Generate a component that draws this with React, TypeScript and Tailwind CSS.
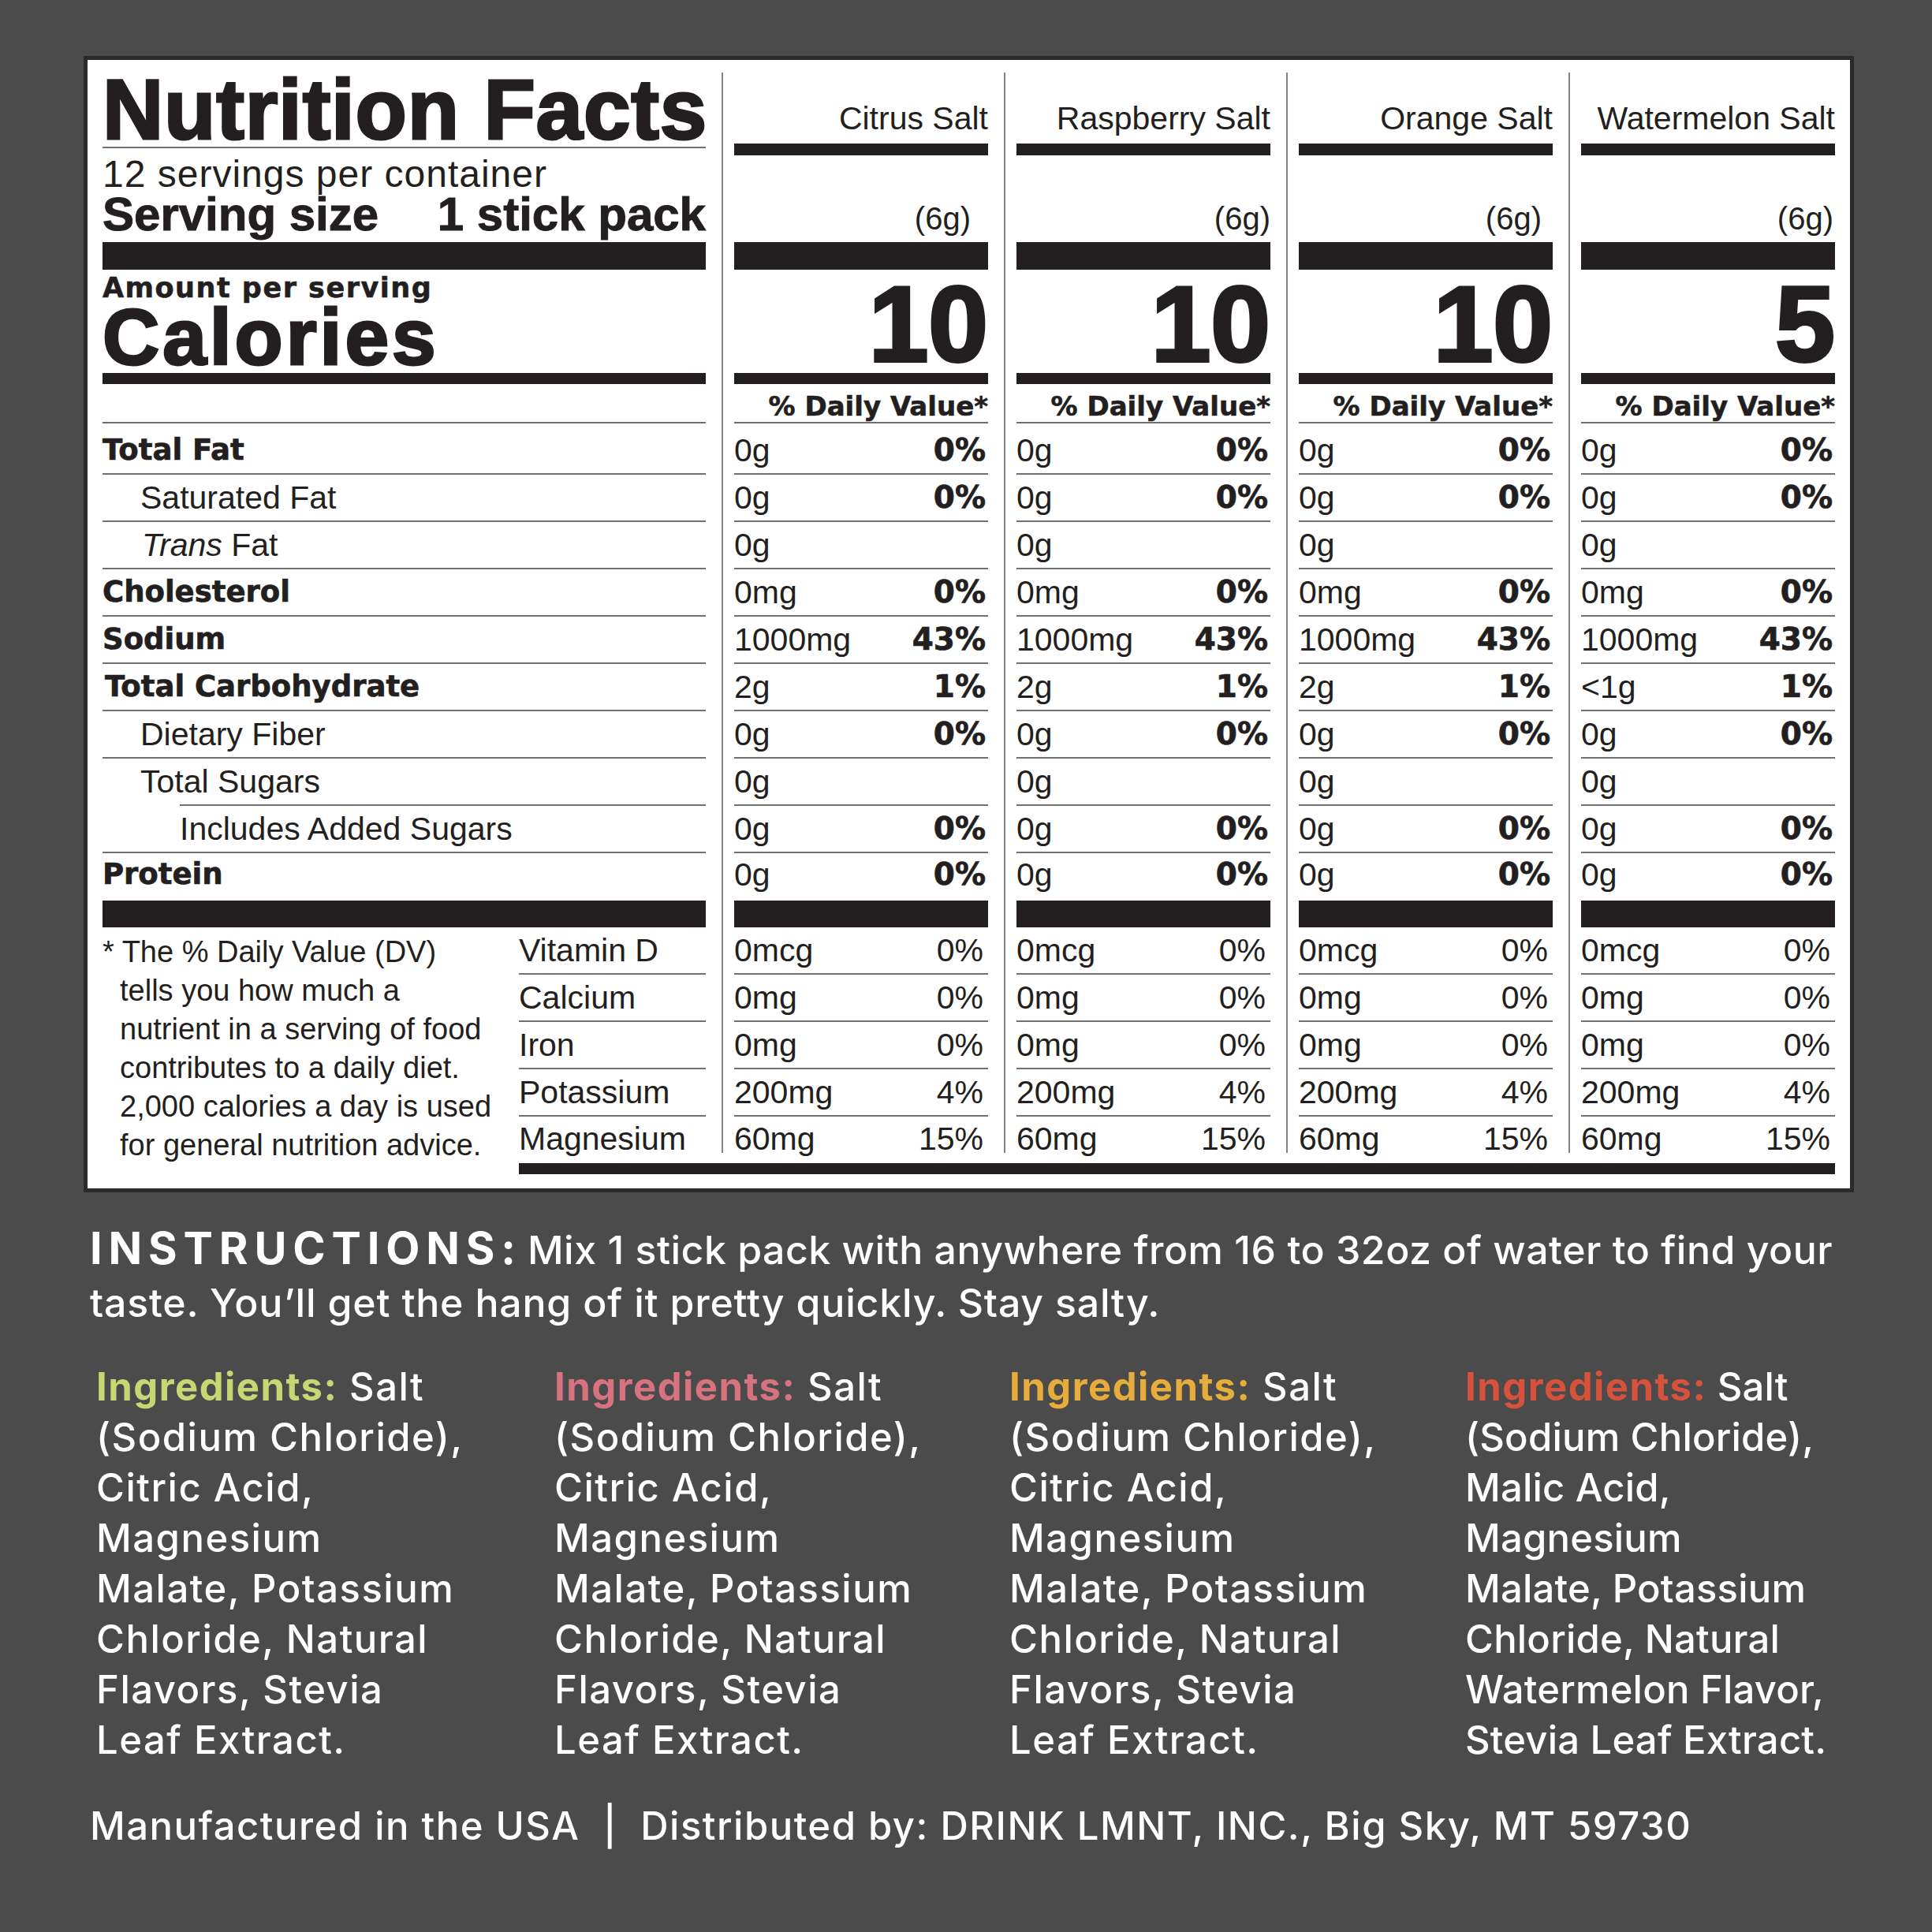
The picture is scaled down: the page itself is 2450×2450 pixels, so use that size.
import type { ReactNode } from "react";

const INK = "#231f20";

type Flavor = { name: string; cal: string; carb: string; gramPad: string };

const flavors: Flavor[] = [
  { name: "Citrus Salt", cal: "10", carb: "2g", gramPad: "pr-[22px]" },
  { name: "Raspberry Salt", cal: "10", carb: "2g", gramPad: "pr-[0px]" },
  { name: "Orange Salt", cal: "10", carb: "2g", gramPad: "pr-[14px]" },
  { name: "Watermelon Salt", cal: "5", carb: "<1g", gramPad: "pr-[2px]" },
];

type Row = {
  label: ReactNode;
  labelClass: string;
  rowClass: string;
  val: (f: Flavor) => string;
  dv: string;
};

const bold = "font-['DejaVu_Sans',sans-serif] font-bold text-[37px] [-webkit-text-stroke:0.7px_#231f20]";
const reg = "text-[41px]";

// main nutrient rows; first row is a touch taller than the rest
const rows: Row[] = [
  { label: "Total Fat", labelClass: bold, rowClass: "h-[65px]", val: () => "0g", dv: "0%" },
  { label: "Saturated Fat", labelClass: `${reg} pl-[48px]`, rowClass: "h-[60px]", val: () => "0g", dv: "0%" },
  {
    label: (
      <>
        <i>Trans</i> Fat
      </>
    ),
    labelClass: `${reg} pl-[50px]`,
    rowClass: "h-[60px]",
    val: () => "0g",
    dv: "",
  },
  { label: "Cholesterol", labelClass: bold, rowClass: "h-[60px]", val: () => "0mg", dv: "0%" },
  { label: "Sodium", labelClass: bold, rowClass: "h-[60px]", val: () => "1000mg", dv: "43%" },
  { label: "Total Carbohydrate", labelClass: `${bold} pl-[3px]`, rowClass: "h-[60px]", val: (f) => f.carb, dv: "1%" },
  { label: "Dietary Fiber", labelClass: `${reg} pl-[48px]`, rowClass: "h-[60px]", val: () => "0g", dv: "0%" },
  { label: "Total Sugars", labelClass: `${reg} pl-[48px]`, rowClass: "h-[60px]", val: () => "0g", dv: "" },
  { label: "Includes Added Sugars", labelClass: `${reg} pl-[98px]`, rowClass: "h-[60px]", val: () => "0g", dv: "0%" },
];

const vitamins = [
  { label: "Vitamin D", val: "0mcg", dv: "0%" },
  { label: "Calcium", val: "0mg", dv: "0%" },
  { label: "Iron", val: "0mg", dv: "0%" },
  { label: "Potassium", val: "200mg", dv: "4%" },
  { label: "Magnesium", val: "60mg", dv: "15%" },
];

const ingredients = [
  {
    color: "text-[#c9d674]",
    body: "tracking-[1.5px]",
    lines: ["(Sodium Chloride),", "Citric Acid,", "Magnesium", "Malate, Potassium", "Chloride, Natural", "Flavors, Stevia", "Leaf Extract."],
  },
  {
    color: "text-[#d6737e]",
    body: "tracking-[1.5px]",
    lines: ["(Sodium Chloride),", "Citric Acid,", "Magnesium", "Malate, Potassium", "Chloride, Natural", "Flavors, Stevia", "Leaf Extract."],
  },
  {
    color: "text-[#e6ad3d]",
    body: "tracking-[1.5px]",
    lines: ["(Sodium Chloride),", "Citric Acid,", "Magnesium", "Malate, Potassium", "Chloride, Natural", "Flavors, Stevia", "Leaf Extract."],
  },
  {
    color: "text-[#d7523d]",
    body: "tracking-[0.2px]",
    lines: ["(Sodium Chloride),", "Malic Acid,", "Magnesium", "Malate, Potassium", "Chloride, Natural", "Watermelon Flavor,", "Stevia Leaf Extract."],
  },
];

function Bar({ h }: { h: string }) {
  return <div className={`${h} bg-[#231f20]`} />;
}

function LeftColumn() {
  return (
    <div className="w-[765px] shrink-0">
      <div className="h-[96px] whitespace-nowrap border-b-2 border-[#6f6f6f] text-[107px] font-bold leading-[95px] tracking-[0.8px] [-webkit-text-stroke:3px_#231f20]">
        Nutrition Facts
      </div>
      <div className="flex h-[119px] flex-col">
        <div className="mt-[9px] whitespace-nowrap text-[48px] leading-[48px] tracking-[1px]">
          12 servings per container
        </div>
        <div className="mt-[3px] flex justify-between whitespace-nowrap text-[60px] font-bold leading-[48px] [-webkit-text-stroke:1px_#231f20]">
          <span>Serving size</span>
          <span>1 stick pack</span>
        </div>
      </div>
      <Bar h="h-[35px]" />
      <div className="flex h-[131px] flex-col">
        <div className="mt-[5px] whitespace-nowrap font-['DejaVu_Sans',sans-serif] text-[35px] font-bold leading-[36px] tracking-[1.5px] [-webkit-text-stroke:0.6px_#231f20]">
          Amount per serving
        </div>
        <div className="mt-[4px] text-[100px] font-bold leading-[80px] tracking-[4px] [-webkit-text-stroke:3px_#231f20]">
          Calories
        </div>
      </div>
      <Bar h="h-[14px]" />
      <div className="h-[50px] border-b-2 border-[#6f6f6f]" />

      {rows.map((r, i) => (
        <div
          key={i}
          className={`flex items-end border-b-2 border-[#6f6f6f] pb-[7px] ${r.rowClass} ${i === 7 ? "ml-[98px]" : ""}`}
        >
          <span className={`whitespace-nowrap leading-[44px] ${r.labelClass} ${i === 7 ? "-ml-[98px]" : ""}`}>
            {r.label}
          </span>
        </div>
      ))}
      <div className="flex h-[60px] items-end pb-[11px]">
        <span className={`leading-[44px] ${bold}`}>Protein</span>
      </div>
      <Bar h="h-[34px]" />

      <div className="flex">
        <div className="h-[286px] w-[528px] shrink-0 pl-[22px] pt-[7px] -indent-[22px] text-[38px] leading-[49px]">
          * The % Daily Value (DV)
          <br />
          tells you how much a
          <br />
          nutrient in a serving of food
          <br />
          contributes to a daily diet.
          <br />
          2,000 calories a day is used
          <br />
          for general nutrition advice.
        </div>
        <div className="flex-1">
          {vitamins.map((v, i) =>
            i < 4 ? (
              <div key={v.label} className="flex h-[60px] items-end border-b-2 border-[#6f6f6f] pb-[7px]">
                <span className="text-[41px] leading-[44px]">{v.label}</span>
              </div>
            ) : (
              <div key={v.label} className="flex h-[46px] items-end">
                <span className="-mb-[4px] text-[41px] leading-[44px]">{v.label}</span>
              </div>
            ),
          )}
        </div>
      </div>
    </div>
  );
}

function FlavorColumn({ f }: { f: Flavor }) {
  return (
    <div className="ml-[20px] shrink-0 border-l-2 border-[#858585] pl-[14px]">
      <div className="w-[322px]">
        <div className="flex h-[90px] items-end justify-end whitespace-nowrap pb-[12px] text-[41px] leading-[40px]">
          {f.name}
        </div>
        <Bar h="h-[15px]" />
        <div className={`flex h-[110px] items-end justify-end pb-[10px] text-[40px] leading-[40px] ${f.gramPad}`}>
          (6g)
        </div>
        <Bar h="h-[35px]" />
        <div className="flex h-[131px] items-end justify-end pb-[2px] text-[136px] font-bold leading-[120px] [-webkit-text-stroke:4px_#231f20]">
          {f.cal}
        </div>
        <Bar h="h-[14px]" />
        <div className="flex h-[50px] items-end justify-end whitespace-nowrap border-b-2 border-[#6f6f6f] pb-[2px] font-['DejaVu_Sans',sans-serif] text-[34px] font-bold leading-[36px] [-webkit-text-stroke:0.6px_#231f20]">
          % Daily Value*
        </div>

        {rows.map((r, i) => (
          <div
            key={i}
            className={`flex items-end justify-between border-b-2 border-[#6f6f6f] pb-[7px] pr-[3px] ${r.rowClass}`}
          >
            <span className="text-[41px] leading-[44px]">{r.val(f)}</span>
            <span className={`leading-[44px] ${bold} text-[39px]`}>{r.dv}</span>
          </div>
        ))}
        <div className="flex h-[60px] items-end justify-between pb-[11px] pr-[3px]">
          <span className="text-[41px] leading-[44px]">0g</span>
          <span className={`leading-[44px] ${bold} text-[39px]`}>0%</span>
        </div>
        <Bar h="h-[34px]" />

        {vitamins.map((v, i) =>
          i < 4 ? (
            <div key={v.label} className="flex h-[60px] items-end justify-between border-b-2 border-[#6f6f6f] pb-[7px] pr-[6px]">
              <span className="text-[41px] leading-[44px]">{v.val}</span>
              <span className="text-[41px] leading-[44px]">{v.dv}</span>
            </div>
          ) : (
            <div key={v.label} className="flex h-[46px] items-end justify-between pr-[6px]">
              <span className="-mb-[4px] text-[41px] leading-[44px]">{v.val}</span>
              <span className="-mb-[4px] text-[41px] leading-[44px]">{v.dv}</span>
            </div>
          ),
        )}
      </div>
    </div>
  );
}

export default function App() {
  return (
    <div className="h-[2450px] w-[2450px] overflow-hidden bg-[#4b4b4b] pt-[71px]">
      {/* label card */}
      <div
        className="ml-[106px] w-[2245px] border-[5px] border-[#2a2a2a] bg-white pb-[18px] pl-[19px] pr-[19px] pt-[16px] font-['Liberation_Sans',Arial,sans-serif]"
        style={{ color: INK }}
      >
        <div className="flex">
          <LeftColumn />
          {flavors.map((f) => (
            <FlavorColumn key={f.name} f={f} />
          ))}
        </div>
        <div className="ml-[528px] mt-[13px] h-[14px] bg-[#231f20]" />
      </div>

      {/* instructions */}
      <div className="ml-[114px] mt-[40px] whitespace-nowrap font-['Inter',sans-serif] text-[50px] font-medium leading-[67px] tracking-[0.8px] text-white">
        <span className="text-[56px] font-bold leading-[60px] tracking-[0.14em]">INSTRUCTIONS</span>
        <span className="text-[56px] font-bold leading-[60px]">:</span>{" "}
        <span className="tracking-[0.5px]">Mix 1 stick pack with anywhere from 16 to 32oz of water to find your</span>
        <br />
        taste. You’ll get the hang of it pretty quickly. Stay salty.
      </div>

      <div className="ml-[122px] mt-[41px] grid grid-cols-[581px_577px_578px_500px] font-['Inter',sans-serif] text-[49px] font-medium leading-[64px] text-white">
        {ingredients.map((ing, i) => (
          <div key={i} className={`whitespace-nowrap ${ing.body}`}>
            <span className={`font-bold tracking-[1.5px] ${ing.color}`}>Ingredients:</span> Salt
            {ing.lines.map((l) => (
              <div key={l}>{l}</div>
            ))}
          </div>
        ))}
      </div>

      <div className="ml-[114px] mt-[45px] whitespace-pre font-['Inter',sans-serif] text-[49px] font-medium leading-[64px] tracking-[1.5px] text-white">
        {"Manufactured in the USA  |  Distributed by: DRINK LMNT, INC., Big Sky, MT 59730"}
      </div>
    </div>
  );
}
